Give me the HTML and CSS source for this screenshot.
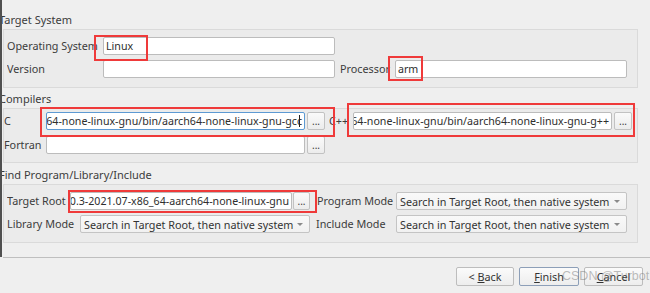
FILE: index.html
```html
<!DOCTYPE html>
<html>
<head>
<meta charset="utf-8">
<link rel="stylesheet" href="styles.css">
</head>
<body>
<div class="main">
  <div class="title t1">Target System</div>
  <div class="group g1">
    <div class="row">
      <span class="label w96">Operating System</span>
      <div class="input w232"><span>Linux</span></div>
    </div>
    <div class="row">
      <span class="label w96">Version</span>
      <div class="input w232"></div>
      <span class="label w60 pl5">Processor</span>
      <div class="input w232"><span>arm</span></div>
    </div>
  </div>

  <div class="title t2">Compilers</div>
  <div class="group g2">
    <div class="row">
      <span class="label w42">C</span>
      <div class="input w259 focus end"><span>/opt/gcc-arm-10.3-2021.07-x86_64-aarch64-none-linux-gnu/bin/aarch64-none-linux-gnu-gcc</span><i class="cursor"></i></div>
      <button class="dots">...</button>
      <span class="label w28 pl4">C++</span>
      <div class="input w259 end"><span>/opt/gcc-arm-10.3-2021.07-x86_64-aarch64-none-linux-gnu/bin/aarch64-none-linux-gnu-g++</span></div>
      <button class="dots">...</button>
    </div>
    <div class="row">
      <span class="label w42">Fortran</span>
      <div class="input w259"></div>
      <button class="dots">...</button>
    </div>
  </div>

  <div class="title t3">Find Program/Library/Include</div>
  <div class="group g3">
    <div class="row">
      <span class="label w63">Target Root</span>
      <div class="input w222 end"><span>/opt/gcc-arm-10.3-2021.07-x86_64-aarch64-none-linux-gnu</span></div>
      <button class="dots d1">...</button>
      <span class="label w86 pl7">Program Mode</span>
      <div class="combo w231"><span>Search in Target Root, then native system</span><i class="arrow"></i></div>
    </div>
    <div class="row">
      <span class="label w73">Library Mode</span>
      <div class="combo w230"><span>Search in Target Root, then native system</span><i class="arrow"></i></div>
      <span class="label w86 pl6">Include Mode</span>
      <div class="combo w231"><span>Search in Target Root, then native system</span><i class="arrow"></i></div>
    </div>
  </div>
</div>
<div class="sep"></div>
<div class="buttons">
  <button class="btn b-back">&lt; <u>B</u>ack</button>
  <button class="btn b-finish"><u>F</u>inish</button>
  <button class="btn b-cancel"><u>C</u>ancel</button>
</div>

<div class="mark m-linux"></div>
<div class="mark m-arm"></div>
<div class="mark m-c"></div>
<div class="mark m-cpp"></div>
<div class="mark m-root"></div>
<div class="watermark">CSDN @Turbot</div>
</body>
</html>
```

FILE: styles.css
```css
html, body {
  margin: 0;
  padding: 0;
}
body {
  width: 650px;
  height: 293px;
  overflow: hidden;
  position: relative;
  background: #efefef;
  font-family: "Noto Sans", "Open Sans", sans-serif;
  font-size: 10.8px;
  color: #3c3c3c;
}
.main {
  height: 257px;
  box-sizing: border-box;
  border-left: 2px solid #505050;
  overflow: hidden;
}
.title {
  height: 14px;
  line-height: 14px;
  margin-left: -3px;
  margin-bottom: 2px;
  white-space: nowrap;
  font-size: 11px;
}
.t1 { margin-top: 13px; }
.t2 { margin-top: 4px; }
.t3 { margin-top: 5px; }

.group {
  margin-left: 1px;
  width: 635px;
  box-sizing: border-box;
  border: 1px solid #dadada;
  background: #ebebeb;
  display: flex;
  flex-direction: column;
}
.g1 { height: 59px; padding: 7px 0 0 3px; gap: 5px; }
.g2 { height: 55px; padding: 3px 0 0 0; gap: 6px; }
.g3 { height: 59px; padding: 7px 0 0 3px; gap: 5px; }

.row {
  display: flex;
  align-items: center;
  height: 18px;
}
.label {
  white-space: nowrap;
  box-sizing: border-box;
  line-height: 18px;
  overflow: hidden;
  flex: none;
}
.w96 { width: 96px; }
.w60 { width: 60px; }
.w42 { width: 42px; }
.w28 { width: 28px; }
.w63 { width: 63px; }
.w73 { width: 73px; }
.w86 { width: 86px; }
.pl4 { padding-left: 4px; }
.pl5 { padding-left: 5px; }
.pl6 { padding-left: 6px; }
.pl7 { padding-left: 7px; }

.input {
  flex: none;
  height: 18px;
  box-sizing: border-box;
  background: #ffffff;
  border: 1px solid #bcbcbc;
  border-radius: 2px;
  display: flex;
  align-items: center;
  padding: 0 2px;
  overflow: hidden;
  white-space: nowrap;
  color: #2e2e2e;
  line-height: 16px;
  font-size: 10.65px;
}
.input.end { justify-content: flex-end; }
.input span { flex: none; }
.input.focus { border-color: #5d9ad3; }
.cursor {
  flex: none;
  width: 1px;
  height: 12px;
  background: #222;
  margin-left: -3px;
  margin-right: 2px;
}
.w232 { width: 232px; }
.w259 { width: 259px; }
.w222 { width: 222px; }
.w231 { width: 231px; }
.w230 { width: 230px; }

.dots {
  flex: none;
  width: 18px;
  height: 18px;
  margin-left: 2px;
  padding: 0;
  box-sizing: border-box;
  border: 1px solid #c2c2c2;
  border-radius: 2px;
  background: linear-gradient(#fafafa, #ececec);
  font-family: inherit;
  font-size: 10px;
  color: #3c3c3c;
  line-height: 14px;
}
.dots.d1 { width: 17px; margin-left: 1px; }

.combo {
  flex: none;
  height: 18px;
  box-sizing: border-box;
  border: 1px solid #c4c4c4;
  border-radius: 2px;
  background: linear-gradient(#f9f9f9, #f1f1f1);
  display: flex;
  align-items: center;
  justify-content: space-between;
  padding: 0 6px 0 3px;
  white-space: nowrap;
  overflow: hidden;
  color: #333;
}
.arrow {
  flex: none;
  width: 0;
  height: 0;
  border-left: 3px solid transparent;
  border-right: 3px solid transparent;
  border-top: 3px solid #8a8a8a;
}

.sep {
  height: 1px;
  margin-left: 3px;
  background: #bfbfbf;
}
.buttons {
  display: flex;
  gap: 5px;
  margin-top: 9px;
  padding-left: 456px;
}
.btn {
  flex: none;
  height: 19px;
  box-sizing: border-box;
  padding: 0;
  border: 1px solid #bdbdbd;
  border-radius: 2px;
  background: linear-gradient(#fbfbfb, #ededed);
  font-family: inherit;
  font-size: 10.8px;
  color: #333;
  line-height: 15px;
}
.b-back { width: 58px; }
.b-finish { width: 60px; border-color: #8d9fb8; }
.b-cancel { width: 59px; }

.mark {
  position: absolute;
  box-sizing: border-box;
  border: 2px solid #ef3a3a;
}
.m-linux { left: 94px; top: 35px; width: 54px; height: 26px; }
.m-arm { left: 388px; top: 56px; width: 35px; height: 25px; }
.m-c { left: 40px; top: 107px; width: 295px; height: 30px; }
.m-cpp { left: 347px; top: 103px; width: 288px; height: 34px; }
.m-root { left: 68px; top: 190px; width: 249px; height: 23px; }

.watermark {
  position: absolute;
  left: 562px;
  top: 269px;
  font-family: "Liberation Sans", sans-serif;
  font-size: 12.5px;
  color: rgba(110, 110, 110, 0.45);
  white-space: nowrap;
}
```
